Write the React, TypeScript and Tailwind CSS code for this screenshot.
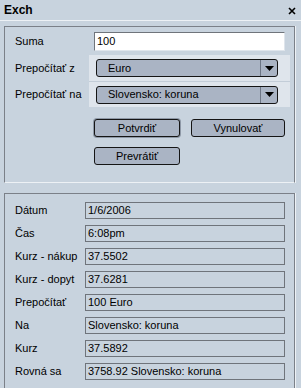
import React from "react";

const infoRows: [string, string][] = [
  ["Dátum", "1/6/2006"],
  ["Čas", "6:08pm"],
  ["Kurz - nákup", "37.5502"],
  ["Kurz - dopyt", "37.6281"],
  ["Prepočítať", "100 Euro"],
  ["Na", "Slovensko: koruna"],
  ["Kurz", "37.5892"],
  ["Rovná sa", "3758.92 Slovensko: koruna"],
];

const Select = ({ value }: { value: string }) => (
  <div className="flex h-[18px] w-[182px] items-center rounded-[3px] border border-[#151515] bg-[#aab4c4]">
    <span className="flex-1 pl-[11px] leading-none">{value}</span>
    <div className="flex h-full w-[17px] items-center justify-center border-l border-[#6d7685]">
      <svg width="9" height="5" viewBox="0 0 9 5">
        <polygon points="0,0 9,0 4.5,5" fill="#000" />
      </svg>
    </div>
  </div>
);

const Btn = ({ label, width, main }: { label: string; width: string; main?: boolean }) => (
  <button
    className={`flex h-[18px] items-center justify-center rounded-[3px] border border-[#151515] bg-[#aab4c4] leading-none ${width} ${
      main ? "shadow-[0_0_0_1px_#8e98a6]" : ""
    }`}
  >
    {label}
  </button>
);

export default function App() {
  return (
    <div className="h-[388px] w-[301px] overflow-hidden bg-[#c8d3de] font-['Liberation_Sans',Arial,sans-serif] text-[11px] text-black">
      {/* title bar */}
      <div className="flex h-[21px] items-center justify-between border-b border-[#edf1f5] pl-[4px] pr-[5px]">
        <span className="text-[12px] font-bold">Exch</span>
        <svg width="8" height="8" viewBox="0 0 8 8" className="mt-[1px]">
          <path d="M1 1 L7 7 M7 1 L1 7" stroke="#000" strokeWidth="1.6" />
        </svg>
      </div>

      {/* conversion panel */}
      <div className="ml-[4px] mt-[5px] h-[157px] w-[291px] border-x border-t border-b border-[#7b8088] border-b-[#edf1f5] shadow-[1px_0_0_#edf1f5]">
        <div className="flex h-[28px] items-center">
          <span className="w-[84px] pl-[10px]">Suma</span>
          <div className="ml-[5px] flex h-[19px] w-[191px] items-center border border-[#6f747b] border-b-[#dfe5ec] border-r-[#dfe5ec] bg-white pl-[2px]">
            100
          </div>
        </div>
        <div className="flex h-[27px] items-center">
          <span className="w-[84px] pl-[10px]">Prepočítať z</span>
          <div className="flex h-full w-[201px] items-center border-b border-[#c3cdd8] bg-[#dfe5ec] pl-[7px]">
            <Select value="Euro" />
          </div>
        </div>
        <div className="flex h-[25px] items-center">
          <span className="w-[84px] pl-[10px]">Prepočítať na</span>
          <div className="flex h-full w-[201px] items-center bg-[#dfe5ec] pl-[7px]">
            <Select value="Slovensko: koruna" />
          </div>
        </div>
        <div className="ml-[89px] mt-[12px] flex flex-col gap-[10px]">
          <div className="flex gap-[11px]">
            <Btn label="Potvrdiť" width="w-[86px]" main />
            <Btn label="Vynulovať" width="w-[94px]" />
          </div>
          <Btn label="Prevrátiť" width="w-[86px]" />
        </div>
      </div>

      {/* info panel */}
      <div className="ml-[4px] mt-[10px] w-[291px] border-x border-t border-[#7b8088] pb-[10px] pt-[8px] shadow-[1px_0_0_#edf1f5]">
        <div className="flex flex-col gap-[6px]">
          {infoRows.map(([label, value]) => (
            <div key={label} className="flex items-center">
              <span className="w-[80px] pl-[10px]">{label}</span>
              <div className="flex h-[17px] w-[200px] items-center border border-[#6f747b] pl-[2px]">
                {value}
              </div>
            </div>
          ))}
        </div>
      </div>
    </div>
  );
}
